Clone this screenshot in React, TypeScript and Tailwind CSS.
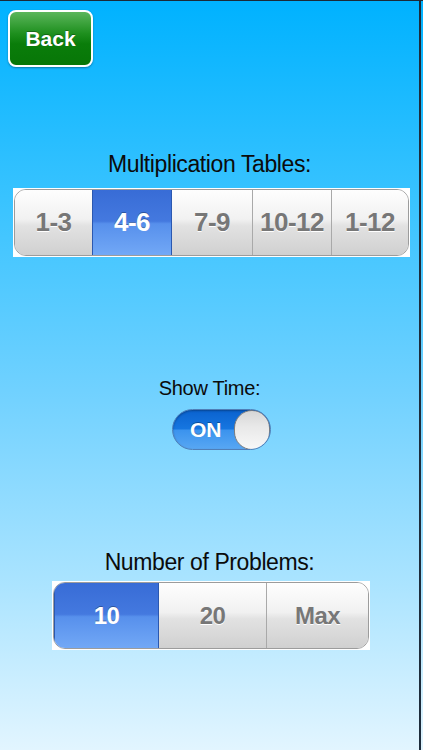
import { useState } from "react";

const font = { fontFamily: '"Liberation Sans", Arial, Helvetica, sans-serif' };

function Segmented({
  options,
  value,
  onChange,
  segW,
  className,
  textSize,
}: {
  options: string[];
  value: number;
  onChange: (i: number) => void;
  segW: string[];
  className: string;
  textSize: string;
}) {
  return (
    <div className={`bg-white p-px ${className}`}>
      <div className="flex h-[67px] rounded-[12px] overflow-hidden border border-[#9c9c9c]">
        {options.map((o, i) => {
          const sel = i === value;
          return (
            <button
              key={o}
              onClick={() => onChange(i)}
              className={`${segW[i]} ${textSize} flex items-center justify-center font-bold tracking-[-0.5px] ${
                sel
                  ? "text-white bg-[linear-gradient(to_bottom,#386cd6_0%,#4479df_48%,#5790ec_52%,#72a8f6_100%)] border-x border-[#2b58b0] [text-shadow:0_-1px_0_rgba(0,0,0,0.3)]"
                  : "text-[#777777] bg-[linear-gradient(to_bottom,#fefefe_0%,#f1f1f1_45%,#e2e2e2_55%,#d0d0d0_100%)] [text-shadow:0_1px_0_#ffffff]"
              } ${i > 0 && !sel && value !== i - 1 ? "border-l border-[#a9a9a9]" : ""}`}
            >
              {o}
            </button>
          );
        })}
      </div>
    </div>
  );
}

export default function App() {
  const [table, setTable] = useState(1);
  const [count, setCount] = useState(0);
  const [showTime, setShowTime] = useState(true);

  return (
    <div
      style={font}
      className="w-[423px] h-[750px] overflow-hidden bg-[linear-gradient(to_bottom,#00b2ff_0%,#3cc4ff_28%,#70d1ff_52%,#abe4ff_78%,#e2f5ff_100%)] border-t border-[#1b2a38]"
    >
      <div className="w-[421px] h-full border-r-2 border-[#1d2c3b] flex flex-col">
        {/* Back button */}
        <button className="ml-[8px] mt-[9px] w-[85px] h-[57px] rounded-[8px] border-2 border-white shadow-[0_1px_2px_rgba(0,0,0,0.35)] bg-[linear-gradient(to_bottom,#5cb65c_0%,#1f901f_40%,#0a7d0a_60%,#077607_100%)] text-white text-[21px] font-bold flex items-center justify-center [text-shadow:0_-1px_0_rgba(0,0,0,0.3)]">
          Back
        </button>

        <div className="mt-[86px] text-center text-[23px] leading-[23px] tracking-[-0.4px] text-[#0b0b0b]">
          Multiplication Tables:
        </div>
        <Segmented
          className="mt-[12px] ml-[13px] w-[397px]"
          options={["1-3", "4-6", "7-9", "10-12", "1-12"]}
          value={table}
          onChange={setTable}
          textSize="text-[26px]"
          segW={["w-[77px]", "w-[80px]", "w-[80px]", "w-[79px]", "flex-1"]}
        />

        <div className="mt-[121px] text-center text-[20px] leading-[20px] tracking-[-0.3px] text-[#0b0b0b]">
          Show Time:
        </div>
        <button
          onClick={() => setShowTime((v) => !v)}
          className="mt-[11px] ml-[172px] w-[99px] h-[41px] rounded-full border border-[#4f7fb8] bg-[linear-gradient(to_bottom,#0a62cf_0%,#1676e0_48%,#3b93ee_52%,#58a7f3_100%)] flex items-center justify-between overflow-hidden shadow-[inset_0_1px_2px_rgba(0,0,0,0.3)]"
        >
          <span className="ml-[17px] text-white text-[21px] font-bold [text-shadow:0_-1px_0_rgba(0,0,0,0.3)]">
            {showTime ? "ON" : "OFF"}
          </span>
          <span className="w-[36px] h-[40px] rounded-full border border-[#7f7f7f] bg-[linear-gradient(to_bottom,#d6d6d6_0%,#e8e8e8_40%,#f8f8f8_100%)]" />
        </button>

        <div className="mt-[101px] text-center text-[23px] leading-[23px] tracking-[-0.4px] text-[#0b0b0b]">
          Number of Problems:
        </div>
        <Segmented
          className="mt-[7px] ml-[52px] w-[318px]"
          options={["10", "20", "Max"]}
          value={count}
          onChange={setCount}
          textSize="text-[24px]"
          segW={["w-[105px]", "w-[107px]", "flex-1"]}
        />
      </div>
    </div>
  );
}
